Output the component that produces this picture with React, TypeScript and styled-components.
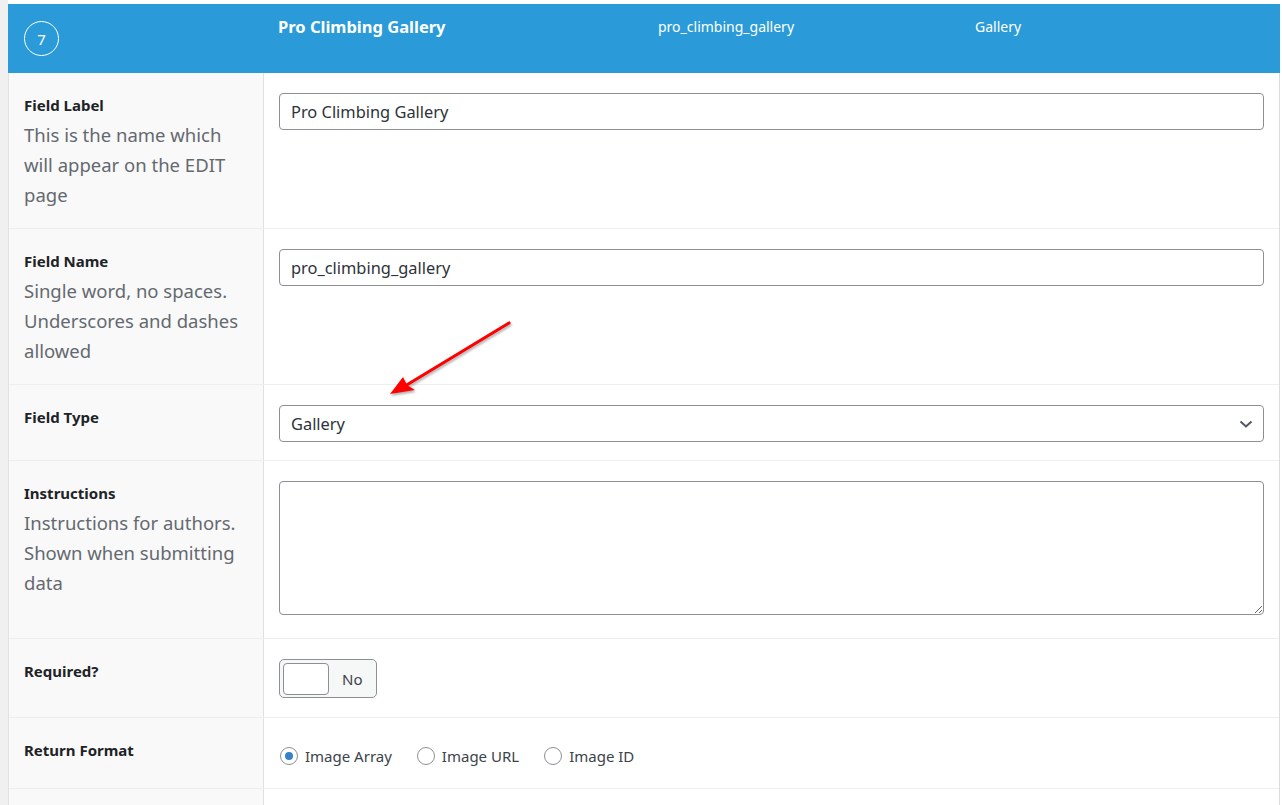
import React from "react";
import styled, { createGlobalStyle } from "styled-components";

const Global = createGlobalStyle`
  html, body { margin: 0; padding: 0; background: #fff; }
  body { font-family: "Noto Sans", "Open Sans", sans-serif; overflow: hidden; }
  * { box-sizing: border-box; }
`;

const Page = styled.div`
  position: relative;
  display: flex;
  height: 805px;
  overflow: hidden;
`;

const Gutter = styled.div`
  width: 8px;
  flex: none;
  background: #f0f0f1;
`;

const Panel = styled.div`
  flex: 1;
  margin-right: 2px;
  padding-top: 4px;
  display: flex;
  flex-direction: column;
`;

const Header = styled.div`
  height: 69px;
  flex: none;
  background: #2a9bd8;
  color: #fff;
  display: grid;
  grid-template-columns: 255px 380px 317px 1fr;
`;

const NumCell = styled.div`
  display: flex;
  align-items: center;
  padding-left: 16px;
`;

const Circle = styled.div`
  width: 35px;
  height: 35px;
  border: 1px solid #fff;
  border-radius: 50%;
  display: flex;
  align-items: center;
  justify-content: center;
  font-size: 15px;
`;

const HeadText = styled.div<{ $strong?: boolean }>`
  padding: 13px 0 0 15px;
  font-size: ${(p) => (p.$strong ? "16.5px" : "14px")};
  font-weight: ${(p) => (p.$strong ? 700 : 400)};
  line-height: 20px;
`;

const Rows = styled.div`
  flex: 1;
  border-left: 1px solid #e2e2e2;
  border-right: 1px solid #dcdcde;
`;

const Row = styled.div`
  display: grid;
  grid-template-columns: 255px 1fr;
  border-bottom: 1px solid #eeeeee;
`;

const LabelCell = styled.div`
  background: #f9f9f9;
  border-right: 1px solid #e1e1e1;
  padding: 22px 20px 18px 15px;
`;

const Label = styled.div`
  font-size: 15px;
  font-weight: 700;
  line-height: 20px;
  color: #1d2327;
`;

const Desc = styled.div`
  margin-top: 5px;
  font-size: 18.5px;
  line-height: 30px;
  color: #646970;
`;

const FieldCell = styled.div<{ $top?: number; $bottom?: number }>`
  padding: ${(p) => p.$top ?? 20}px 15px ${(p) => p.$bottom ?? 20}px 15px;
`;

const TextInput = styled.input`
  display: block;
  width: 100%;
  height: 37px;
  border: 1px solid #8c8f94;
  border-radius: 4px;
  padding: 0 11px;
  font-family: inherit;
  font-size: 16.4px;
  color: #2c3338;
  background: #fff;
  outline: none;
`;

const SelectWrap = styled.div`
  position: relative;
`;

const Select = styled.select`
  display: block;
  width: 100%;
  height: 37px;
  appearance: none;
  border: 1px solid #8c8f94;
  border-radius: 4px;
  padding: 0 30px 0 11px;
  font-family: inherit;
  font-size: 16.4px;
  color: #2c3338;
  background: #fff;
  outline: none;
`;

const Chevron = styled.svg`
  position: absolute;
  right: 11px;
  top: 12px;
  pointer-events: none;
`;

const TextArea = styled.textarea`
  display: block;
  width: 100%;
  height: 134px;
  border: 1px solid #8c8f94;
  border-radius: 4px;
  resize: vertical;
  font-family: inherit;
  font-size: 16px;
  background: #fff;
  outline: none;
`;

const Toggle = styled.div`
  width: 98px;
  height: 39px;
  border: 1px solid #8c8f94;
  border-radius: 5px;
  background: #f6f7f7;
  display: flex;
  align-items: center;
  padding: 3px;
  gap: 13px;
`;

const Knob = styled.div`
  width: 46px;
  height: 32px;
  background: #fff;
  border: 1px solid #8c8f94;
  border-radius: 4px;
`;

const ToggleText = styled.span`
  font-size: 15px;
  color: #3c434a;
`;

const RadioList = styled.div`
  display: flex;
  align-items: center;
  gap: 24px;
`;

const RadioItem = styled.label`
  display: flex;
  align-items: center;
  gap: 7px;
  font-size: 15px;
  color: #3c434a;
  line-height: 24px;
`;

const RadioDot = styled.span<{ $checked?: boolean }>`
  width: 18px;
  height: 18px;
  margin-left: 1px;
  border-radius: 50%;
  border: 1px solid #8c8f94;
  background: #fff;
  display: flex;
  align-items: center;
  justify-content: center;
  &::after {
    content: "";
    width: 8px;
    height: 8px;
    border-radius: 50%;
    background: ${(p) => (p.$checked ? "#3582c4" : "transparent")};
  }
`;

const Arrow = styled.svg`
  position: absolute;
  left: 385px;
  top: 315px;
  overflow: visible;
  filter: drop-shadow(1px 2px 1px rgba(0, 0, 0, 0.3));
`;

export default function App() {
  return (
    <>
      <Global />
      <Page>
        <Gutter />
        <Panel>
          <Header>
            <NumCell>
              <Circle>7</Circle>
            </NumCell>
            <HeadText $strong>Pro Climbing Gallery</HeadText>
            <HeadText>pro_climbing_gallery</HeadText>
            <HeadText>Gallery</HeadText>
          </Header>
          <Rows>
            <Row>
              <LabelCell>
                <Label>Field Label</Label>
                <Desc>This is the name which will appear on the EDIT page</Desc>
              </LabelCell>
              <FieldCell>
                <TextInput defaultValue="Pro Climbing Gallery" />
              </FieldCell>
            </Row>
            <Row>
              <LabelCell>
                <Label>Field Name</Label>
                <Desc>Single word, no spaces. Underscores and dashes allowed</Desc>
              </LabelCell>
              <FieldCell>
                <TextInput defaultValue="pro_climbing_gallery" />
              </FieldCell>
            </Row>
            <Row>
              <LabelCell>
                <Label>Field Type</Label>
              </LabelCell>
              <FieldCell $bottom={18}>
                <SelectWrap>
                  <Select defaultValue="gallery">
                    <option value="gallery">Gallery</option>
                  </Select>
                  <Chevron width="14" height="14" viewBox="0 0 14 14">
                    <path d="M1.5 4.5 L7 9.5 L12.5 4.5" fill="none" stroke="#50575e" strokeWidth="2" />
                  </Chevron>
                </SelectWrap>
              </FieldCell>
            </Row>
            <Row>
              <LabelCell>
                <Label>Instructions</Label>
                <Desc>Instructions for authors. Shown when submitting data</Desc>
              </LabelCell>
              <FieldCell $bottom={23}>
                <TextArea />
              </FieldCell>
            </Row>
            <Row>
              <LabelCell>
                <Label>Required?</Label>
              </LabelCell>
              <FieldCell $bottom={19}>
                <Toggle>
                  <Knob />
                  <ToggleText>No</ToggleText>
                </Toggle>
              </FieldCell>
            </Row>
            <Row>
              <LabelCell>
                <Label>Return Format</Label>
              </LabelCell>
              <FieldCell $top={26} $bottom={20}>
                <RadioList>
                  <RadioItem>
                    <RadioDot $checked />
                    Image Array
                  </RadioItem>
                  <RadioItem>
                    <RadioDot />
                    Image URL
                  </RadioItem>
                  <RadioItem>
                    <RadioDot />
                    Image ID
                  </RadioItem>
                </RadioList>
              </FieldCell>
            </Row>
            <Row>
              <LabelCell>
                <Label>&nbsp;</Label>
                <Desc>&nbsp;</Desc>
              </LabelCell>
              <FieldCell />
            </Row>
          </Rows>
        </Panel>
        <Arrow width="130" height="85" viewBox="0 0 130 85">
          <line x1="124" y1="8" x2="20" y2="71" stroke="#ff0000" strokeWidth="3.2" strokeLinecap="round" />
          <path d="M5 79 L18 62 L22 70 L30 75 Z" fill="#ff0000" />
        </Arrow>
      </Page>
    </>
  );
}
